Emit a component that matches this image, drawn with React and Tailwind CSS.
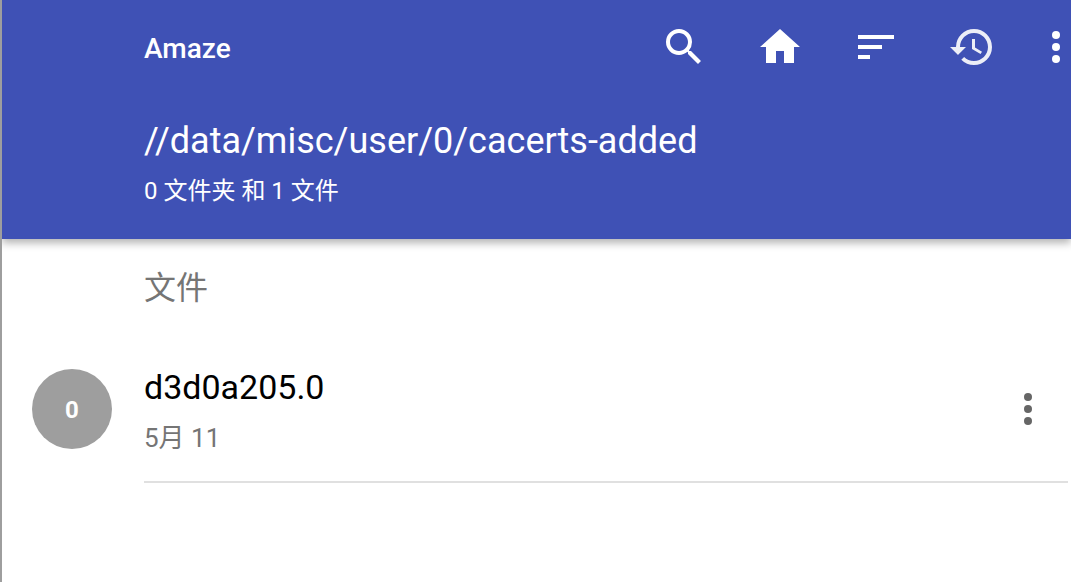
import React from 'react';
import { MdSearch, MdHome, MdSort, MdHistory } from 'react-icons/md';

const files = [{ name: 'd3d0a205.0', initial: '0', date: '5月 11' }];

const ToolButton = ({ icon, label, dimmed }) => (
    <button type="button" aria-label={label} className={`px-6 ${dimmed ? 'opacity-90' : ''}`}>
        {React.cloneElement(icon, { size: 48 })}
    </button>
);

const MoreDots = () => (
    <svg viewBox="0 0 8 32" className="w-2 h-8 block" fill="currentColor">
        <circle cx="4" cy="4" r="4" />
        <circle cx="4" cy="16" r="4" />
        <circle cx="4" cy="28" r="4" />
    </svg>
);

const Header = () => (
    <header className="bg-[#3f51b5] text-white shadow-[0_4px_8px_rgba(0,0,0,0.3)] pb-8">
        <div className="h-[94px] flex items-center pl-[142px] pr-[11px]">
            <h1 className="text-[28px] leading-8 font-medium pt-1">Amaze</h1>
            <nav className="ml-auto flex items-center">
                <ToolButton icon={<MdSearch />} label="搜索" />
                <ToolButton icon={<MdHome />} label="主页" />
                <ToolButton icon={<MdSort />} label="排序" />
                <ToolButton icon={<MdHistory />} label="历史" dimmed />
                <button type="button" aria-label="更多" className="pl-8">
                    <MoreDots />
                </button>
            </nav>
        </div>
        <div className="pl-[142px] pt-[25px]">
            <p className="text-[36px] leading-[44px]">//data/misc/user/0/cacerts-added</p>
            <p className="text-2xl leading-8 mt-3">0 文件夹 和 1 文件</p>
        </div>
    </header>
);

const FileRow = ({ file }) => (
    <li className="flex pl-[30px]">
        <div className="w-20 h-20 mt-6 mr-8 shrink-0 rounded-full bg-[#9e9e9e] flex items-center justify-center">
            <span className="text-white text-2xl font-bold pt-0.5">{file.initial}</span>
        </div>
        <div className="flex-1 mr-[3px] h-[138px] flex items-start border-b-2 border-[#e0e0e0]">
            <div className="flex-1 pt-5">
                <p className="text-[34px] leading-[44px] text-black">{file.name}</p>
                <p className="text-[26px] leading-[34px] mt-3 text-[#757575]">{file.date}</p>
            </div>
            <button type="button" aria-label="更多" className="mt-12 mr-9 text-[#666666]">
                <MoreDots />
            </button>
        </div>
    </li>
);

export default function App() {
    return (
        <div className="min-h-screen bg-white border-l-2 border-[#9e9e9e] overflow-hidden font-[Roboto,'Noto_Sans_CJK_SC',sans-serif]">
            <Header />
            <main>
                <h2 className="h-[106px] pl-[142px] pt-[25px] text-[32px] leading-[48px] text-[#757575]">文件</h2>
                <ul>
                    {files.map((file) => (
                        <FileRow key={file.name} file={file} />
                    ))}
                </ul>
            </main>
        </div>
    );
}
